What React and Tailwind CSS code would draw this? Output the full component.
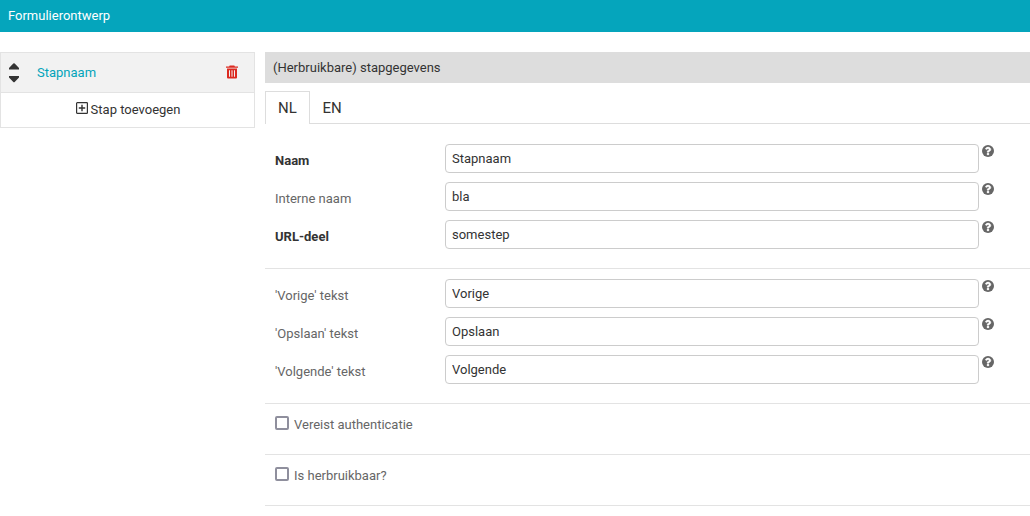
import React from 'react';

function HelpIcon() {
  return (
    <svg className="ml-[3px] mt-px h-3 w-3 shrink-0 fill-[#666]" viewBox="0 0 512 512" aria-label="Help">
      <circle cx="256" cy="256" r="256" />
      <path
        fill="#fff"
        stroke="#fff"
        strokeWidth="18"
        d="M262.700 90c-54.500 0-89.300 23-116.500 63.800-3.500 5.300-2.400 12.400 2.700 16.300l34.700 26.300c5.200 3.900 12.600 3 16.700-2.100 17.900-22.700 30.100-35.800 57.300-35.800 20.400 0 45.700 13.100 45.700 33 0 15-12.400 22.700-32.500 34C247.100 238.500 216 254.900 216 296v4c0 6.600 5.400 12 12 12h56c6.600 0 12-5.400 12-12v-1.300c0-28.500 83.200-29.600 83.200-106.700 0-58-60.200-102-116.500-102zM256 338c-25.400 0-46 20.600-46 46s20.600 46 46 46 46-20.600 46-46-20.600-46-46-46z"
      />
    </svg>
  );
}

function Field({ label, value, required }) {
  return (
    <div className="flex h-[29px] items-start">
      <label className={required ? 'w-[170px] shrink-0 pt-2 font-bold leading-[18px] text-[#333]' : 'w-[170px] shrink-0 pt-2 leading-[18px] text-[#666]'}>
        {label}
      </label>
      <input
        type="text"
        defaultValue={value}
        className="h-[29px] w-[534px] shrink-0 rounded-[4px] border border-[#ccc] bg-white px-1.5 text-[13px] text-[#333] outline-none"
      />
      <HelpIcon />
    </div>
  );
}

function CheckField({ label }) {
  return (
    <div className="flex h-[51px] items-start border-b border-[#e3e3e3] px-2.5 pt-3">
      <input type="checkbox" className="h-3.5 w-3.5 shrink-0 appearance-none rounded-[2px] border-2 border-[#8f8f9d] bg-white" />
      <label className="ml-[5px] leading-[18px] text-[#666]">{label}</label>
    </div>
  );
}

function Sidebar() {
  return (
    <nav className="h-[76px] w-[255px] shrink-0 border border-[#e3e3e3]">
      <div className="flex h-10 items-center border-b border-[#e3e3e3] bg-[#f2f2f2]">
        <svg className="ml-2 h-5 w-2.5 shrink-0 fill-[#333]" viewBox="0 0 10 20">
          <path d="M0 5 4.300.5Q5-.1 5.700.5L10 5V6.400H0ZM0 13h10v1.400l-4.300 4.500q-.7.600-1.400 0L0 14.400Z" />
        </svg>
        <span className="ml-[18px] grow text-[#03a4ba]">Stapnaam</span>
        <svg className="mb-0.5 mr-4 h-3.5 w-3 shrink-0" viewBox="0 0 12 14">
          <path fill="#dc2a20" fillRule="evenodd" d="M3.700.6h4.600l.6.900H12v1.300H0V1.500h3.100ZM1 3.500h10v9.100q0 1-1 1H2q-1 0-1-1ZM3 5.300v6.500h1V5.300Zm2.500 0v6.500h1V5.300Zm2.500 0v6.500h1V5.300Z" />
        </svg>
      </div>
      <button className="flex h-[34px] w-full items-center justify-center pl-px text-[#333]">
        <svg className="mb-1 mr-[3px] h-3 w-3" viewBox="0 0 12 12" fill="none" stroke="#333">
          <rect x=".6" y=".6" width="10.800" height="10.800" rx=".7" strokeWidth="1.200" />
          <path d="M6 2.800v6.400M2.800 6h6.400" strokeWidth="1.400" />
        </svg>
        <span>Stap toevoegen</span>
      </button>
    </nav>
  );
}

export default function App() {
  return (
    <div className="h-[516px] w-full overflow-hidden bg-white font-['Roboto',sans-serif] text-[13px] text-[#333]">
      <header className="flex h-8 items-center bg-[#05a5bc] px-2 text-white">
        <h1>Formulierontwerp</h1>
      </header>
      <div className="flex items-start gap-2.5 pt-5">
        <Sidebar />
        <main className="min-w-0 grow">
          <h2 className="flex h-[31px] items-center bg-[#ddd] px-2">(Herbruikbare) stapgegevens</h2>
          <div className="mt-2 flex h-[33px] text-[15px]">
            <button className="flex w-[45px] items-center justify-center border border-b-0 border-[#ddd]">NL</button>
            <button className="flex w-11 items-center justify-center border-b border-[#ddd] pt-0.5">EN</button>
            <div className="grow border-b border-[#ddd]" />
          </div>
          <section className="flex h-[145px] flex-col gap-[9px] border-b border-[#e3e3e3] px-2.5 pt-5">
            <Field label="Naam" value="Stapnaam" required />
            <Field label="Interne naam" value="bla" />
            <Field label="URL-deel" value="somestep" required />
          </section>
          <section className="flex h-[135px] flex-col gap-[9px] border-b border-[#e3e3e3] px-2.5 pt-2.5">
            <Field label="'Vorige' tekst" value="Vorige" />
            <Field label="'Opslaan' tekst" value="Opslaan" />
            <Field label="'Volgende' tekst" value="Volgende" />
          </section>
          <CheckField label="Vereist authenticatie" />
          <CheckField label="Is herbruikbaar?" />
        </main>
      </div>
    </div>
  );
}
